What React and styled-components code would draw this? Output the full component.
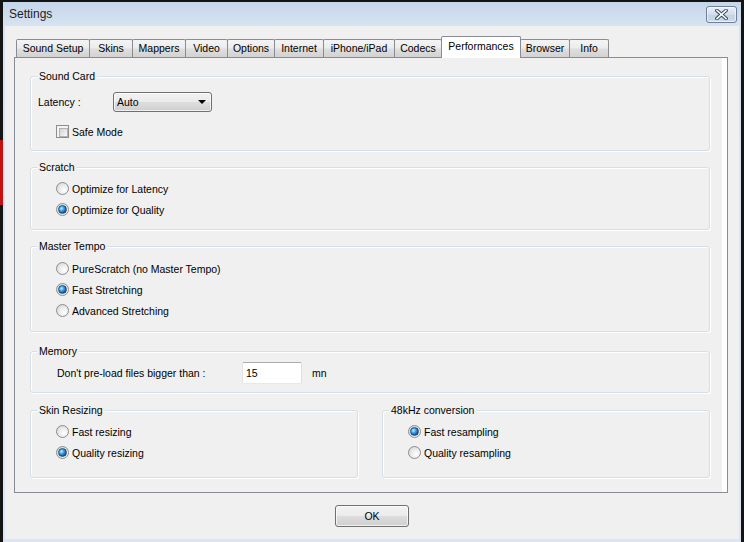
import React from "react";
import styled, { createGlobalStyle } from "styled-components";

const GlobalStyle = createGlobalStyle`
  html, body {
    margin: 0;
    padding: 0;
    background: #111;
  }
  * {
    box-sizing: border-box;
  }
`;

const Root = styled.div`
  width: 744px;
  height: 542px;
  padding: 2px 3px 0 3px;
  overflow: hidden;
  background: linear-gradient(
        to bottom,
        #141414 0,
        #141414 140px,
        #c8100f 140px,
        #c8100f 205px,
        #141414 205px
      )
      left top / 3px 100% no-repeat,
    #141414;
  font-family: "Liberation Sans", Arial, sans-serif;
  font-size: 10.5px;
  color: #000;
`;

const Window = styled.div`
  height: 540px;
  display: flex;
  flex-direction: column;
  background: linear-gradient(to bottom, #c5d6ea 0, #d7e3f1 24px, #dce6f2 100%);
`;

const TitleBar = styled.div`
  height: 24px;
  flex: none;
  display: flex;
  align-items: center;
  justify-content: space-between;
  padding: 0 4px 0 6px;
`;

const Title = styled.span`
  font-size: 12px;
  color: #1e2226;
`;

const CloseButton = styled.div`
  width: 31px;
  height: 17px;
  margin-top: 1px;
  border: 1px solid #6e7f97;
  border-radius: 3px;
  background: linear-gradient(to bottom, #e9eff7 0%, #d3deec 50%, #c4d2e5 51%, #cfdbea 100%);
  box-shadow: inset 0 0 0 1px rgba(255, 255, 255, 0.6);
  display: flex;
  align-items: center;
  justify-content: center;
`;

const Content = styled.div`
  flex: 1;
  margin: 0 2px 3px 2px;
  background: #f0f0f0;
  padding: 10px 0 0 9px;
`;

const TabStrip = styled.div`
  display: flex;
  align-items: flex-end;
  height: 21px;
  margin-left: 2px;
`;

const Tab = styled.div`
  position: relative;
  width: ${(p) => p.$w}px;
  height: ${(p) => (p.$active ? 22 : 18)}px;
  margin-left: -1px;
  margin-bottom: ${(p) => (p.$active ? -1 : 0)}px;
  z-index: ${(p) => (p.$active ? 2 : 1)};
  border: 1px solid #898c95;
  border-bottom: none;
  border-radius: 2px 2px 0 0;
  background: ${(p) =>
    p.$active
      ? "#ffffff"
      : "linear-gradient(to bottom, #f4f4f4 0%, #ececec 45%, #dedede 55%, #d2d2d2 100%)"};
  text-align: center;
  line-height: ${(p) => (p.$active ? 19 : 17)}px;
  white-space: nowrap;

  &:first-child {
    margin-left: 0;
  }
`;

const Panel = styled.div`
  width: 714px;
  height: 436px;
  border: 1px solid #898c95;
  background: #f0f0f0;
  box-shadow: inset -5px 0 0 #ffffff;
  padding: 18px 0 0 15px;
`;

const GroupBox = styled.div`
  width: ${(p) => p.$w || 680}px;
  height: ${(p) => p.$h}px;
  margin-top: ${(p) => p.$mt || 0}px;
  border: 1px solid #d5dfe5;
  border-radius: 3px;
  box-shadow: inset 1px 1px 0 #ffffff, 1px 1px 0 #ffffff;
`;

const Legend = styled.div`
  display: table;
  height: 13px;
  line-height: 13px;
  margin: -7px 0 0 6px;
  padding: 0 2px;
  background: #f0f0f0;
`;

const GroupBody = styled.div`
  margin-top: ${(p) => p.$mt}px;
  padding-left: ${(p) => p.$pl}px;
  display: flex;
  flex-direction: column;
`;

const FieldRow = styled.div`
  display: flex;
  align-items: center;
  height: ${(p) => p.$h || 21}px;
  margin-top: ${(p) => p.$mt || 0}px;
`;

const FieldLabel = styled.span`
  width: ${(p) => p.$w}px;
  flex: none;
`;

const Select = styled.div`
  width: 99px;
  height: 20px;
  border: 1px solid #707070;
  border-radius: 3px;
  background: linear-gradient(to bottom, #f2f2f2 0%, #ebebeb 50%, #dddddd 51%, #cfcfcf 100%);
  box-shadow: inset 0 0 0 1px rgba(255, 255, 255, 0.7);
  display: flex;
  align-items: center;
  justify-content: space-between;
  padding: 0 5px 0 3px;
`;

const Arrow = styled.span`
  width: 0;
  height: 0;
  border-left: 4px solid transparent;
  border-right: 4px solid transparent;
  border-top: 4px solid #000;
`;

const Option = styled.label`
  display: flex;
  align-items: center;
  gap: 3px;
  height: 21px;
`;

const Radio = styled.span`
  width: 13px;
  height: 13px;
  flex: none;
  border-radius: 50%;
  border: 1px solid #8b8d8f;
  background: radial-gradient(circle at 65% 65%, #ffffff 0%, #ececec 45%, #cdcdcd 100%);
  display: flex;
  align-items: center;
  justify-content: center;

  &::after {
    content: "";
    display: ${(p) => (p.$checked ? "block" : "none")};
    width: 7px;
    height: 7px;
    border-radius: 50%;
    border: 1px solid #1c4d7e;
    background: radial-gradient(circle at 35% 35%, #c4ecff 0%, #45a6e4 35%, #0f5aa3 70%, #0a3d73 100%);
  }
`;

const Checkbox = styled.span`
  width: 13px;
  height: 13px;
  flex: none;
  border: 1px solid #8b8d8f;
  background: #f4f4f4;
  padding: 2px;

  &::after {
    content: "";
    display: block;
    width: 100%;
    height: 100%;
    border: 1px solid #b2b2b2;
    background: linear-gradient(135deg, #d2d2d2 0%, #eeeeee 70%, #fbfbfb 100%);
  }
`;

const TextInput = styled.div`
  width: 60px;
  height: 22px;
  border: 1px solid #abadb3;
  border-color: #abadb3 #dbdfe6 #e3e9ef #e2e3ea;
  border-radius: 2px;
  background: #ffffff;
  padding: 0 3px;
  display: flex;
  align-items: center;
`;

const Unit = styled.span`
  margin-left: 10px;
`;

const SplitRow = styled.div`
  display: flex;
  gap: 24px;
  margin-top: 17px;
`;

const Footer = styled.div`
  width: 716px;
  display: flex;
  justify-content: center;
  margin-top: 12px;
`;

const Button = styled.div`
  width: 74px;
  height: 22px;
  border: 1px solid #707070;
  border-radius: 3px;
  background: linear-gradient(to bottom, #f2f2f2 0%, #ebebeb 50%, #dddddd 51%, #cfcfcf 100%);
  box-shadow: inset 0 0 0 1px rgba(255, 255, 255, 0.7);
  display: flex;
  align-items: center;
  justify-content: center;
`;

const tabs = [
  ["Sound Setup", 74],
  ["Skins", 44],
  ["Mappers", 54],
  ["Video", 43],
  ["Options", 48],
  ["Internet", 50],
  ["iPhone/iPad", 72],
  ["Codecs", 48],
  ["Performances", 80],
  ["Browser", 50],
  ["Info", 40],
];

const RadioGroup = ({ title, options, checked, h, mt, w, bodyMt }) => (
  <GroupBox $h={h} $mt={mt} $w={w}>
    <Legend>{title}</Legend>
    <GroupBody $mt={bodyMt} $pl={25}>
      {options.map((o, i) => (
        <Option key={o}>
          <Radio $checked={i === checked} />
          {o}
        </Option>
      ))}
    </GroupBody>
  </GroupBox>
);

const CloseIcon = () => (
  <svg width="13" height="11" viewBox="0 0 13 11">
    <path d="M2 1.5 L11 9.5 M11 1.5 L2 9.5" stroke="#3b4a60" strokeWidth="3.6" strokeLinecap="square" />
    <path d="M2 1.5 L11 9.5 M11 1.5 L2 9.5" stroke="#ffffff" strokeWidth="1.6" strokeLinecap="square" />
  </svg>
);

export default function App() {
  return (
    <Root>
      <GlobalStyle />
      <Window>
        <TitleBar>
          <Title>Settings</Title>
          <CloseButton>
            <CloseIcon />
          </CloseButton>
        </TitleBar>
        <Content>
          <TabStrip>
            {tabs.map(([name, w]) => (
              <Tab key={name} $w={w} $active={name === "Performances"}>
                {name}
              </Tab>
            ))}
          </TabStrip>
          <Panel>
            <GroupBox $h={75}>
              <Legend>Sound Card</Legend>
              <GroupBody $mt={9} $pl={7}>
                <FieldRow $h={20}>
                  <FieldLabel $w={75}>Latency :</FieldLabel>
                  <Select>
                    <span>Auto</span>
                    <Arrow />
                  </Select>
                </FieldRow>
                <FieldRow $mt={9}>
                  <FieldLabel $w={18} />
                  <Option>
                    <Checkbox />
                    Safe Mode
                  </Option>
                </FieldRow>
              </GroupBody>
            </GroupBox>

            <RadioGroup
              title="Scratch"
              h={63}
              mt={16}
              bodyMt={4}
              checked={1}
              options={["Optimize for Latency", "Optimize for Quality"]}
            />

            <RadioGroup
              title="Master Tempo"
              h={86}
              mt={16}
              bodyMt={5}
              checked={1}
              options={["PureScratch (no Master Tempo)", "Fast Stretching", "Advanced Stretching"]}
            />

            <GroupBox $h={42} $mt={19}>
              <Legend>Memory</Legend>
              <GroupBody $mt={4} $pl={26}>
                <FieldRow $h={22}>
                  <FieldLabel $w={185}>Don't pre-load files bigger than :</FieldLabel>
                  <TextInput>15</TextInput>
                  <Unit>mn</Unit>
                </FieldRow>
              </GroupBody>
            </GroupBox>

            <SplitRow>
              <RadioGroup
                title="Skin Resizing"
                w={328}
                h={68}
                bodyMt={4}
                checked={1}
                options={["Fast resizing", "Quality resizing"]}
              />
              <RadioGroup
                title="48kHz conversion"
                w={328}
                h={68}
                bodyMt={4}
                checked={0}
                options={["Fast resampling", "Quality resampling"]}
              />
            </SplitRow>
          </Panel>
          <Footer>
            <Button>OK</Button>
          </Footer>
        </Content>
      </Window>
    </Root>
  );
}
